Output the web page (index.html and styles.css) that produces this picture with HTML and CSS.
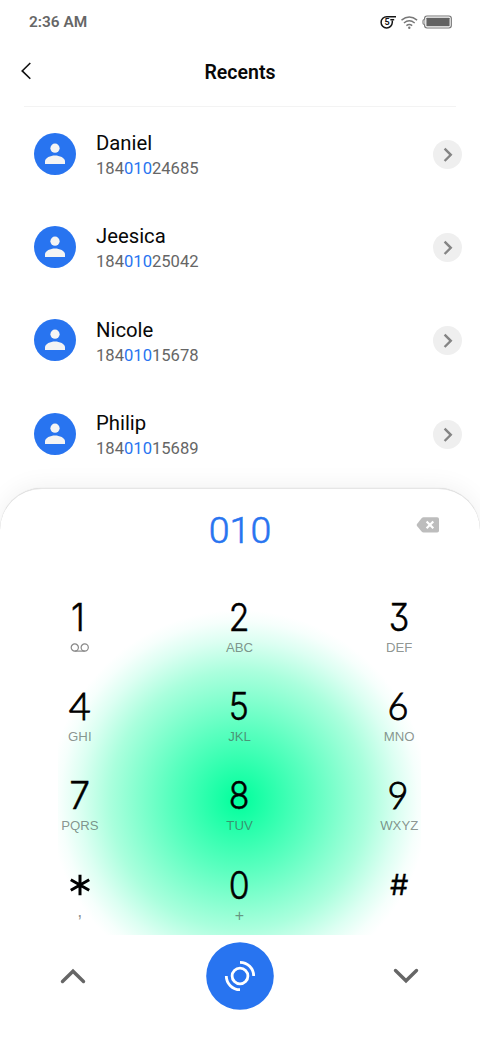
FILE: index.html
```html
<!DOCTYPE html>
<html lang="en">
<head>
<meta charset="utf-8">
<title>Recents</title>
<link rel="stylesheet" href="styles.css">
</head>
<body>
<svg class="defs" width="0" height="0">
  <symbol id="person" viewBox="0 0 42 42"><circle cx="21" cy="15.200" r="4.600"/><path d="M11 31v-2.500C11 24.800 16.500 22.600 21 22.600s10 2.200 10 5.900V31z"/></symbol>
  <symbol id="go" viewBox="0 0 28 28"><path d="M11.200 8.300l6 6-6 6"/></symbol>
</svg>
<div class="screen">
  <header class="status">
    <span class="time">2:36 AM</span>
    <svg class="status-icons" width="76" height="20" viewBox="0 0 76 20">
      <g fill="none" stroke="#151515" stroke-width="1.500"><path d="M17 4.700H7.800A5.600 5.600 0 1 0 13.300 10.500V8.500"/><path d="M11.300 7.700H15.200"/></g>
      <text class="five" x="5.400" y="13.200">5</text>
      <g fill="none" stroke="#777" stroke-width="1.400"><path d="M22.500 8.100Q30.300 2 38.100 8.100"/><path d="M24.900 11Q30.300 6.600 35.700 11"/><path d="M27.400 13.600Q30.300 11.400 33.200 13.600"/></g>
      <circle cx="30.300" cy="15.700" r="1.200" fill="#777"/>
      <rect x="45.600" y="4" width="26.700" height="12" rx="2.400" fill="none" stroke="#777" stroke-width="1.200"/>
      <path d="M45.500 7.500q-1.500 0-1.500 1.200v2.600q0 1.200 1.500 1.200" fill="#fff" stroke="#777" stroke-width="1.100"/>
      <rect x="47.400" y="5.800" width="23.200" height="8.400" rx=".5" fill="#626262"/>
    </svg>
  </header>
  <div class="titlebar">
    <svg class="back" width="12" height="20" viewBox="0 0 12 20"><path d="M10.300 2L2.200 9.900l8.100 7.900"/></svg>
    <h1>Recents</h1>
  </div>
  <ul class="list">
    <li class="row"><svg class="avatar"><use href="#person"/></svg><div class="who"><b>Daniel</b><span>184<em>010</em>24685</span></div><svg class="go"><use href="#go"/></svg></li>
    <li class="row"><svg class="avatar"><use href="#person"/></svg><div class="who"><b>Jeesica</b><span>184<em>010</em>25042</span></div><svg class="go"><use href="#go"/></svg></li>
    <li class="row"><svg class="avatar"><use href="#person"/></svg><div class="who"><b>Nicole</b><span>184<em>010</em>15678</span></div><svg class="go"><use href="#go"/></svg></li>
    <li class="row"><svg class="avatar"><use href="#person"/></svg><div class="who"><b>Philip</b><span>184<em>010</em>15689</span></div><svg class="go"><use href="#go"/></svg></li>
  </ul>
  <section class="dialer">
    <div class="entry">
      <span class="number">010</span>
      <svg class="erase" width="24" height="18" viewBox="0 0 24 18"><path d="M7.500 1.200h13.700q1.800 0 1.800 1.800v11.800q0 1.800-1.800 1.800H7.500q-1 0-1.700-.8L1 9.900q-.8-1 0-2L5.800 2q.7-.8 1.700-.8z" fill="#bdbdbd"/><path d="M10.600 5.500l6.700 6.800m0-6.800l-6.700 6.800" stroke="#fff" stroke-width="2.200"/></svg>
    </div>
    <div class="keys">
      <div class="key"><span class="digit one">1</span><svg class="vm" width="20" height="12" viewBox="0 0 20 12"><circle cx="4.800" cy="5.500" r="3.600"/><circle cx="14.700" cy="5.500" r="3.600"/><path d="M4.800 9.100h9.900"/></svg></div>
      <div class="key"><span class="digit">2</span><small>ABC</small></div>
      <div class="key"><span class="digit">3</span><small>DEF</small></div>
      <div class="key"><span class="digit lato wide">4</span><small>GHI</small></div>
      <div class="key"><span class="digit">5</span><small>JKL</small></div>
      <div class="key"><span class="digit lato">6</span><small>MNO</small></div>
      <div class="key"><span class="digit seven">7</span><small>PQRS</small></div>
      <div class="key"><span class="digit">8</span><small>TUV</small></div>
      <div class="key"><span class="digit lato">9</span><small>WXYZ</small></div>
      <div class="key"><svg class="star" width="22" height="38" viewBox="0 0 22 38"><path d="M11 8.700v20.600M1.800 13.700l18.400 10.600M20.200 13.700L1.800 24.300"/></svg><small class="comma">,</small></div>
      <div class="key"><span class="digit">0</span><small class="plus">+</small></div>
      <div class="key"><span class="digit hash">#</span></div>
    </div>
    <nav class="actions">
      <svg class="arrow" width="28" height="20" viewBox="0 0 28 20"><path d="M3.500 15.500L14 5.200l10.500 10.300"/></svg>
      <svg width="68" height="68" viewBox="0 0 68 68"><circle cx="34" cy="34" r="33.800" fill="#2874f0"/><g fill="none" stroke="#fff" stroke-width="2.800"><circle cx="34" cy="34" r="7.900"/><path d="M34 20.300A13.700 13.700 0 0 1 47.700 34M34 47.700A13.700 13.700 0 0 1 20.300 34"/></g></svg>
      <svg class="arrow" width="28" height="20" viewBox="0 0 28 20"><path d="M3.500 4.500L14 14.800 24.500 4.500"/></svg>
    </nav>
  </section>
</div>
</body>
</html>
```
FILE: styles.css
```css
* { box-sizing: border-box; }
body { margin: 0; background: #fff; font-family: Roboto, sans-serif; }
svg { display: block; flex: none; }
.defs { position: absolute; }
.screen { width: 480px; height: 1040px; overflow: hidden; display: flex; flex-direction: column; }
.status { height: 44px; padding: 0 20px 0 29px; display: flex; justify-content: space-between; align-items: center; }
.time { font-size: 15.400px; font-weight: 600; color: #666; }
.status-icons { margin-right: 5px; }
.five { font: 700 9px Roboto, sans-serif; fill: #151515; }
.titlebar { height: 63px; margin: 0 24px; border-bottom: 1px solid #f3f3f3; display: grid; grid-template-columns: 12px 1fr 12px; padding-top: 16px; }
.titlebar h1 { margin: 1px 0 0; font-size: 19.500px; line-height: 24px; font-weight: 600; text-align: center; color: #080808; }
.back { margin: 1px 0 0 -4px; fill: none; stroke: #111; stroke-width: 1.600; }
.list { list-style: none; margin: 0; padding: 0 18px 0 34px; height: 381px; flex: none; }
.row { height: 93.400px; display: flex; align-items: center; }
.avatar { width: 42px; height: 42px; border-radius: 50%; background: #2874f0; fill: #f4f4f4; }
.who { flex: 1; margin: 4.800px 0 0 20px; display: flex; flex-direction: column; }
.who b { font-size: 20.300px; line-height: 25px; font-weight: 400; color: #080808; }
.who span { font-size: 16.600px; line-height: 25px; color: #666; }
.who em { font-style: normal; color: #2874f0; }
.go { width: 29px; height: 29px; border-radius: 50%; background: #efefef; fill: none; stroke: #858585; stroke-width: 2.300; margin-top: 1px; }
.dialer { height: 552px; flex: none; border-radius: 42px 42px 0 0; border-top: 1px solid #e6e6e6; background: #fff; box-shadow: 0 -2px 24px rgba(0,0,0,.06), 0 0 1px rgba(0,0,0,.22); }
.entry { height: 109px; padding: 19px 40px 0; display: grid; grid-template-columns: 24px 1fr 24px; }
.number { grid-column: 2; text-align: center; font-size: 37.500px; line-height: 44px; font-weight: 300; -webkit-text-stroke: .6px #2874f0; color: #2874f0; }
.erase { margin-top: 8px; }
.keys { height: 337px; display: grid; grid-template-columns: repeat(3, 159.700px); grid-auto-rows: 89.200px; background: radial-gradient(circle 190px at 181px 202px, #00ff9c, #5affbf 37%, #aaffdd 68%, #dcfff2 84%, #f6fffc 94%, #fff) 58px 0 / 363px 337px no-repeat; }
.key { display: flex; flex-direction: column; align-items: center; }
.digit { font-family: Inter, sans-serif; font-size: 38px; line-height: 38px; font-weight: 300; color: #000; font-feature-settings: "cv09"; -webkit-text-stroke: .5px #000; transform: translateX(-.5px) scaleX(.89); }
.one { transform: translateX(-1.500px) scaleX(.92); }
.seven { transform: scaleX(.98); }
.lato { font-family: Lato, sans-serif; -webkit-text-stroke: .9px #000; transform: translate(-1px, -1px) scaleX(.95); }
.wide { transform: translateY(-1px); }
.key small { font: 13.200px/16px "Liberation Sans", sans-serif; color: rgba(70,80,75,.62); margin-top: 4px; }
.key .comma { font-size: 18px; line-height: 6px; }
.key .plus { font-size: 16px; }
.vm { margin-top: 6px; fill: none; stroke: #888; stroke-width: 1.200; }
.star { fill: none; stroke: #000; stroke-width: 3; }
.hash { font-size: 29px; font-weight: 400; -webkit-text-stroke: .3px #000; transform: none; }
.actions { height: 82px; padding: 0 60px 0 59px; display: flex; justify-content: space-between; align-items: center; }
.arrow { fill: none; stroke: #666; stroke-width: 3.400; stroke-linecap: round; }
```
